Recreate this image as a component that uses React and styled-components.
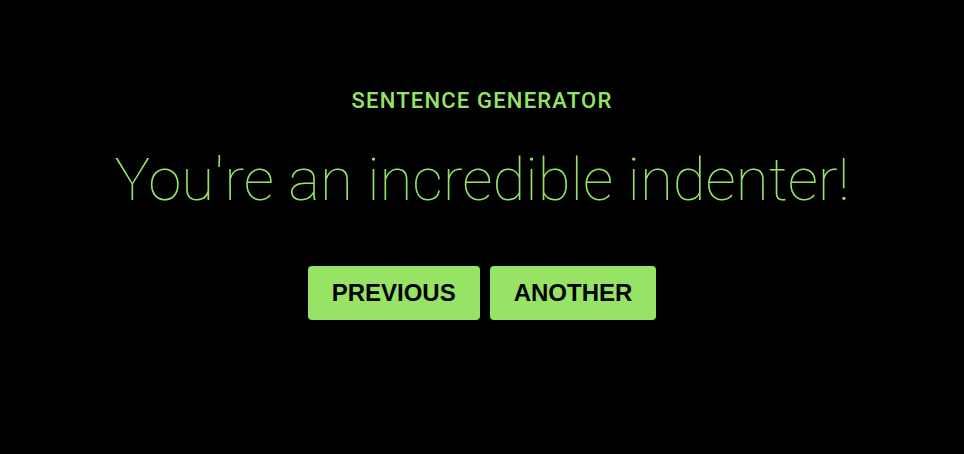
import React from "react";
import styled, { createGlobalStyle } from "styled-components";

const Global = createGlobalStyle`
  html, body { margin: 0; padding: 0; background: #000; }
  body { font-family: Roboto, "Noto Sans", sans-serif; }
`;

const Page = styled.main`
  width: 964px;
  height: 454px;
  background: #000;
  display: flex;
  flex-direction: column;
  align-items: center;
  padding-top: 87px;
  box-sizing: border-box;
`;

const Title = styled.h1`
  margin: 0;
  font-family: Roboto, sans-serif;
  font-weight: 500;
  font-size: 22px;
  line-height: 27px;
  letter-spacing: 1.2px;
  color: #97e366;
  text-transform: uppercase;
`;

const Sentence = styled.p`
  margin: 26px 0 0;
  font-family: Roboto, sans-serif;
  font-weight: 100;
  font-size: 60px;
  line-height: 80px;
  color: #97e366;
`;

const Actions = styled.div`
  display: flex;
  gap: 10px;
  margin-top: 46px;
`;

const Button = styled.button`
  height: 54px;
  padding: 0 24px;
  border: none;
  border-radius: 4px;
  background: #97e366;
  color: #000;
  font-family: "Liberation Sans", Arial, sans-serif;
  font-weight: 700;
  font-size: 24px;
  text-transform: uppercase;
  cursor: pointer;
`;

export default function App() {
  return (
    <>
      <Global />
      <Page>
        <Title>Sentence Generator</Title>
        <Sentence>You're an incredible indenter!</Sentence>
        <Actions>
          <Button>Previous</Button>
          <Button>Another</Button>
        </Actions>
      </Page>
    </>
  );
}
